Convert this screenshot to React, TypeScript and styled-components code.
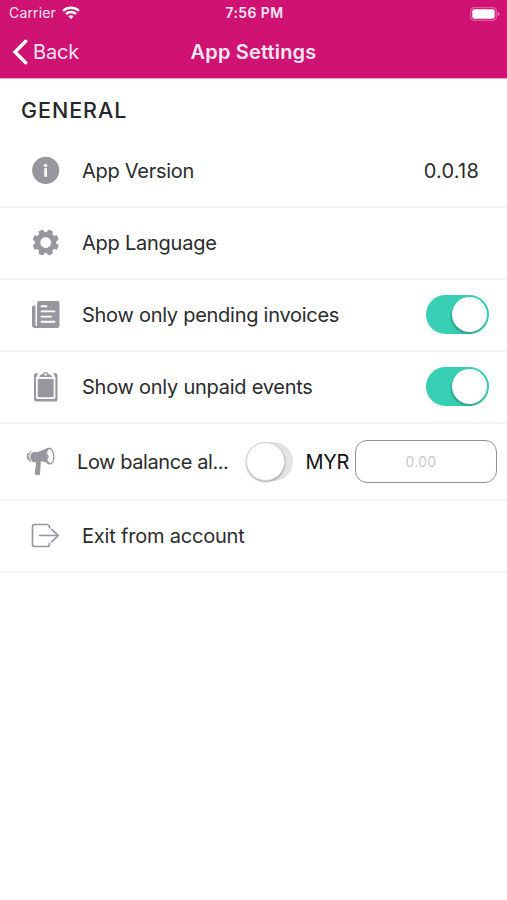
import React from "react";
import styled, { createGlobalStyle } from "styled-components";

const GlobalStyle = createGlobalStyle`
  *, *::before, *::after { box-sizing: border-box; }
  body { margin: 0; background: #fff; font-family: Inter, "Liberation Sans", sans-serif; }
`;

const Screen = styled.main`
  width: 507px;
  height: 900px;
  background: #fff;
  overflow: hidden;
`;

const Header = styled.header`
  height: 79px;
  background: #d01272;
  border-bottom: 1px solid #eba5cb;
  color: #ffe6f4;
`;

const StatusBar = styled.div`
  display: grid;
  grid-template-columns: 1fr auto 1fr;
  align-items: center;
  height: 27px;
  padding: 0 7px 0 9px;
`;

const StatusGroup = styled.div<{ $end?: boolean }>`
  display: flex;
  align-items: center;
  justify-content: ${(p) => (p.$end ? "flex-end" : "flex-start")};
  gap: 6px;
`;

const NavBar = styled.nav`
  display: grid;
  grid-template-columns: 1fr auto 1fr;
  align-items: center;
  height: 50px;
  padding: 0 12px;
`;

const BackButton = styled.button`
  display: flex;
  align-items: center;
  gap: 5px;
  padding: 0;
  border: 0;
  background: none;
  color: inherit;
  font: inherit;
`;

const Text = styled.span<{ $size: number; $spacing?: number; $weight?: number; $color?: string }>`
  font-size: ${(p) => p.$size}px;
  font-weight: ${(p) => p.$weight ?? 400};
  letter-spacing: ${(p) => p.$spacing ?? 0}px;
  color: ${(p) => p.$color ?? "inherit"};
  line-height: 1.2;
  white-space: nowrap;
`;

const SectionTitle = styled.h2`
  display: flex;
  align-items: center;
  height: 57px;
  margin: 0;
  padding: 7px 0 0 21px;
  color: #25272b;
`;

const Row = styled.div<{ $tall?: boolean; $right?: number }>`
  display: flex;
  align-items: center;
  height: ${(p) => (p.$tall ? 77 : 72)}px;
  padding: 0 ${(p) => p.$right ?? 18}px 0 ${(p) => (p.$tall ? 25 : 30)}px;
  border-bottom: 2px solid #f5f5f5;
  color: #2b2b2d;
`;

const IconBox = styled.span`
  display: flex;
  flex: none;
  width: 32px;
  height: 32px;
  margin-right: 20px;
  color: #97989f;
`;

const Label = styled(Text)`
  flex: 1;
`;

const Switch = styled.span<{ $on?: boolean }>`
  display: flex;
  flex: none;
  align-items: center;
  justify-content: ${(p) => (p.$on ? "flex-end" : "flex-start")};
  width: ${(p) => (p.$on ? 63 : 47)}px;
  height: 39px;
  margin-right: ${(p) => (p.$on ? 0 : 12)}px;
  margin-bottom: 1px;
  padding: ${(p) => (p.$on ? "0 2px" : "0")};
  border-radius: 20px;
  background: ${(p) => (p.$on ? "#37cfb3" : "#e4e4e4")};
`;

const Knob = styled.span<{ $on?: boolean }>`
  width: ${(p) => (p.$on ? 35 : 39)}px;
  height: ${(p) => (p.$on ? 35 : 39)}px;
  border-radius: 50%;
  background: #fff;
  border: ${(p) => (p.$on ? "0" : "1px solid #d5d5d5")};
  box-shadow: ${(p) => (p.$on ? "-1px 2px 2px rgba(0,80,65,.35)" : "0 1px 2px rgba(0,0,0,.35)")};
`;

const AmountInput = styled.input`
  width: 142px;
  height: 43px;
  margin-left: 6px;
  padding: 0 10px 0 0;
  border: 1.5px solid #929292;
  border-radius: 12px;
  background: #fff;
  text-align: center;
  font: 400 14px Inter, sans-serif;
  letter-spacing: 0.3px;
  outline: none;
  &::placeholder { color: #c9c9c9; opacity: 1; }
`;

const WifiIcon = () => (
  <svg width="18" height="14" viewBox="0 0 18 14" fill="none" stroke="#fff" strokeWidth="2.4">
    <path d="M1 4.8C5.4.7 12.6.7 17 4.8M4 8c2.8-2.6 7.2-2.6 10 0" />
    <path d="M6.3 10.2c1.6-1.3 3.8-1.3 5.4 0L9 13z" fill="#fff" stroke="none" />
  </svg>
);

const BatteryIcon = () => (
  <svg width="30" height="14" viewBox="0 0 30 14">
    <rect x=".7" y=".7" width="25.6" height="12.6" rx="3.5" fill="none" stroke="#e35ca3" strokeWidth="1.2" />
    <rect x="2.3" y="2.3" width="22.4" height="9.4" rx="2" fill="#fff" />
    <path d="M27.7 4.8c2.2.8 2.2 3.6 0 4.4z" fill="#ea7fb8" />
  </svg>
);

const ChevronIcon = () => (
  <svg width="16" height="26" viewBox="0 0 16 26" fill="none" stroke="#fff" strokeWidth="3.4" strokeLinecap="round" strokeLinejoin="miter">
    <path d="M13.7 2.2L3 13l10.7 10.8" />
  </svg>
);

const InfoIcon = () => (
  <svg width="32" height="32" viewBox="0 0 32 32">
    <circle cx="15.7" cy="15.3" r="13.6" fill="currentColor" />
    <circle cx="15.6" cy="10.4" r="1.7" fill="#fff" />
    <path d="M14.3 13.2h2.7v8.6h-2.7z" fill="#fff" />
  </svg>
);

const toothAngles = [22.5, 67.5, 112.5, 157.5, 202.5, 247.5, 292.5, 337.5];

const GearIcon = () => (
  <svg width="32" height="32" viewBox="0 0 32 32" fill="currentColor">
    <circle cx="15.7" cy="15.5" r="8" fill="none" stroke="currentColor" strokeWidth="5.2" />
    {toothAngles.map((angle) => (
      <path key={angle} d="M12.4 7.5l.6-4q.2-1.1 1.2-1.1h3q1 0 1.2 1.1l.6 4z" transform={`rotate(${angle} 15.7 15.5)`} />
    ))}
  </svg>
);

const InvoiceIcon = () => (
  <svg width="32" height="32" viewBox="0 0 32 32">
    <path d="M9 2h18.5q2 0 2 2v23q0 2-2 2H5q-3 0-3-3V8.5q0-2 2-2h3.2V4q0-2 1.8-2z" fill="currentColor" />
    <path d="M6.2 6.5v19.8" stroke="#fff" strokeWidth="1.5" strokeLinecap="round" />
    <path d="M11.5 7.2h5M11.5 12.4h13M11.5 17.6h9.5M11.5 22.8h13" fill="none" stroke="#fff" strokeWidth="1.9" strokeLinecap="round" />
  </svg>
);

const ClipboardIcon = () => (
  <svg width="32" height="32" viewBox="0 0 32 32">
    <rect x="4" y="2.2" width="23.5" height="28.3" rx="2" fill="currentColor" />
    <path d="M8.5 2h14.4l3.1 5.5H5.5z" fill="#fff" />
    <path d="M9.3 6c.2-1.9 1.6-2.4 3.5-2.7C13.4.3 18 .3 18.6 3.3c1.9.3 3.3.8 3.5 2.7z" fill="currentColor" />
    <circle cx="15.7" cy="3.5" r="1.2" fill="#fff" />
    <rect x="6.9" y="6.9" width="17.6" height="20.3" rx="1" fill="none" stroke="#fff" strokeWidth="1.7" />
  </svg>
);

const MegaphoneIcon = () => (
  <svg width="32" height="32" viewBox="0 0 32 32">
    <path d="M7.4 6.2C13 6.4 17 4.8 22.5 1.7l2.7 17.1c-3.4-2.6-6.2-3.6-9.4-3.4l-.7 12.3q0 1.2-1.2 1.3l-3.2-.2q-1.1-.2-1-1.3l1.5-11.4-2.6.2C4.6 14.3 4.4 9.2 7.4 6.2z" fill="currentColor" />
    <ellipse cx="24.4" cy="10.1" rx="5.1" ry="8.5" transform="rotate(-5 24.4 10.1)" fill="currentColor" />
    <ellipse cx="25" cy="10.1" rx="3.2" ry="6.9" transform="rotate(-5 25 10.1)" fill="#fff" />
    <path d="M21.7 7.2c2.2 1.2 2.4 4.4.6 6.2z" fill="currentColor" />
    <path d="M5.8 5.2C3 8.2 3.1 12.7 5.6 15.8M3.2 7c-1.4 2.3-1.2 4.5 0 6.7" fill="none" stroke="currentColor" strokeWidth="1.1" />
  </svg>
);

const ExitIcon = () => (
  <svg width="32" height="32" viewBox="0 0 32 32" fill="none" stroke="currentColor" strokeWidth="1.7" strokeLinecap="round">
    <path d="M19.5 7.8V7q0-2-2-2.5H5q-2.5 0-2.5 2.5v17.2q0 2.3 2.5 2.3h12.5q2 0 2-2.5v-.8M9.5 15.5h18.7M21.7 9.3l6.5 6.2-6.5 6.2" />
  </svg>
);

export default function App() {
  return (
    <Screen>
      <GlobalStyle />
      <Header>
        <StatusBar>
          <StatusGroup>
            <Text $size={14} $spacing={0.15}>Carrier</Text>
            <WifiIcon />
          </StatusGroup>
          <Text $size={14} $weight={600} $spacing={0.4}>7:56 PM</Text>
          <StatusGroup $end>
            <BatteryIcon />
          </StatusGroup>
        </StatusBar>
        <NavBar>
          <BackButton>
            <ChevronIcon />
            <Text $size={20} $spacing={-0.2}>Back</Text>
          </BackButton>
          <Text $size={20} $weight={600} $spacing={0.17}>App Settings</Text>
        </NavBar>
      </Header>
      <SectionTitle>
        <Text $size={21.5} $weight={500} $spacing={0.95}>GENERAL</Text>
      </SectionTitle>
      <Row $right={28}>
        <IconBox><InfoIcon /></IconBox>
        <Label $size={20} $spacing={-0.28}>App Version</Label>
        <Text $size={20} $spacing={0.2}>0.0.18</Text>
      </Row>
      <Row>
        <IconBox><GearIcon /></IconBox>
        <Label $size={20} $spacing={-0.24}>App Language</Label>
      </Row>
      <Row>
        <IconBox><InvoiceIcon /></IconBox>
        <Label $size={20} $spacing={-0.27}>Show only pending invoices</Label>
        <Switch $on><Knob $on /></Switch>
      </Row>
      <Row>
        <IconBox><ClipboardIcon /></IconBox>
        <Label $size={20} $spacing={-0.25}>Show only unpaid events</Label>
        <Switch $on><Knob $on /></Switch>
      </Row>
      <Row $tall $right={10}>
        <IconBox><MegaphoneIcon /></IconBox>
        <Label $size={20} $spacing={-0.42}>Low balance al...</Label>
        <Switch><Knob /></Switch>
        <Text $size={20} $color="#111" $spacing={-0.3}>MYR</Text>
        <AmountInput placeholder="0.00" />
      </Row>
      <Row>
        <IconBox><ExitIcon /></IconBox>
        <Label $size={20} $spacing={-0.2}>Exit from account</Label>
      </Row>
    </Screen>
  );
}
